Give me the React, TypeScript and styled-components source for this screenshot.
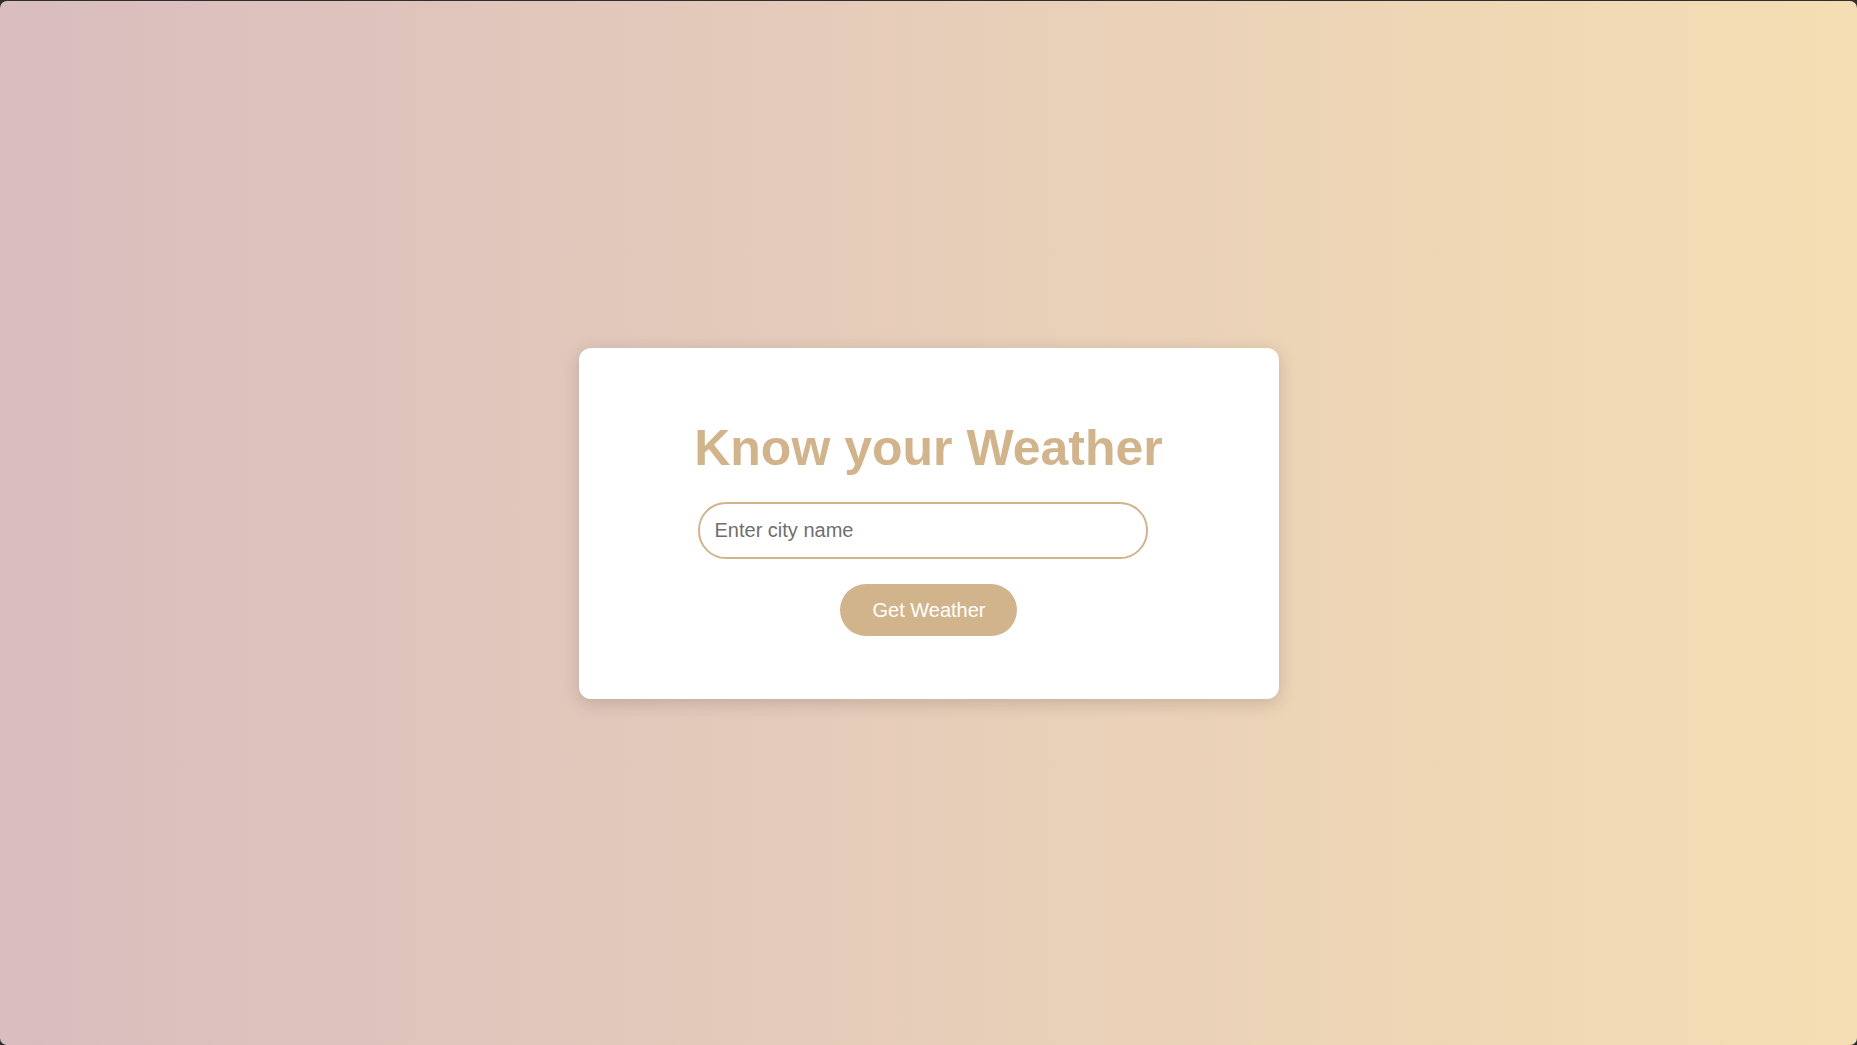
import React from "react";
import styled, { createGlobalStyle } from "styled-components";

const Global = createGlobalStyle`
  html, body { margin: 0; padding: 0; background: #2e2e2e; }
  body { font-family: "Liberation Sans", Arial, sans-serif; }
  * { box-sizing: border-box; }
`;

const Page = styled.div`
  margin-top: 1px;
  height: calc(100vh - 1px);
  border-radius: 7px;
  overflow: hidden;
  background: linear-gradient(to right, #d9bdbf, #f5deb3);
  display: flex;
  align-items: center;
  justify-content: center;
`;

const Card = styled.div`
  width: 700px;
  height: 351px;
  background: #ffffff;
  border-radius: 12px;
  box-shadow: 0 4px 18px rgba(0, 0, 0, 0.16);
  display: flex;
  flex-direction: column;
  align-items: center;
  padding: 71px 40px 0;
  margin-top: 1px;
`;

const Title = styled.h1`
  margin: 0;
  font-size: 50px;
  line-height: 58px;
  font-weight: 700;
  color: #d2b48c;
`;

const CityInput = styled.input`
  margin-top: 25px;
  margin-right: 12px;
  width: 450px;
  height: 57px;
  border: 2px solid #d2b48c;
  border-radius: 28px;
  padding: 0 15px;
  font-family: "Liberation Sans", Arial, sans-serif;
  font-size: 20px;
  color: #333;
  outline: none;
  &::placeholder { color: #6f6f6f; }
`;

const Button = styled.button`
  margin-top: 25px;
  height: 52px;
  padding: 0 31px 0 32px;
  border: none;
  border-radius: 26px;
  background: #d2b48c;
  color: #ffffff;
  font-family: "Liberation Sans", Arial, sans-serif;
  font-size: 20px;
  cursor: pointer;
`;

export default function App() {
  return (
    <>
      <Global />
      <Page>
        <Card>
          <Title>Know your Weather</Title>
          <CityInput placeholder="Enter city name" />
          <Button>Get Weather</Button>
        </Card>
      </Page>
    </>
  );
}
